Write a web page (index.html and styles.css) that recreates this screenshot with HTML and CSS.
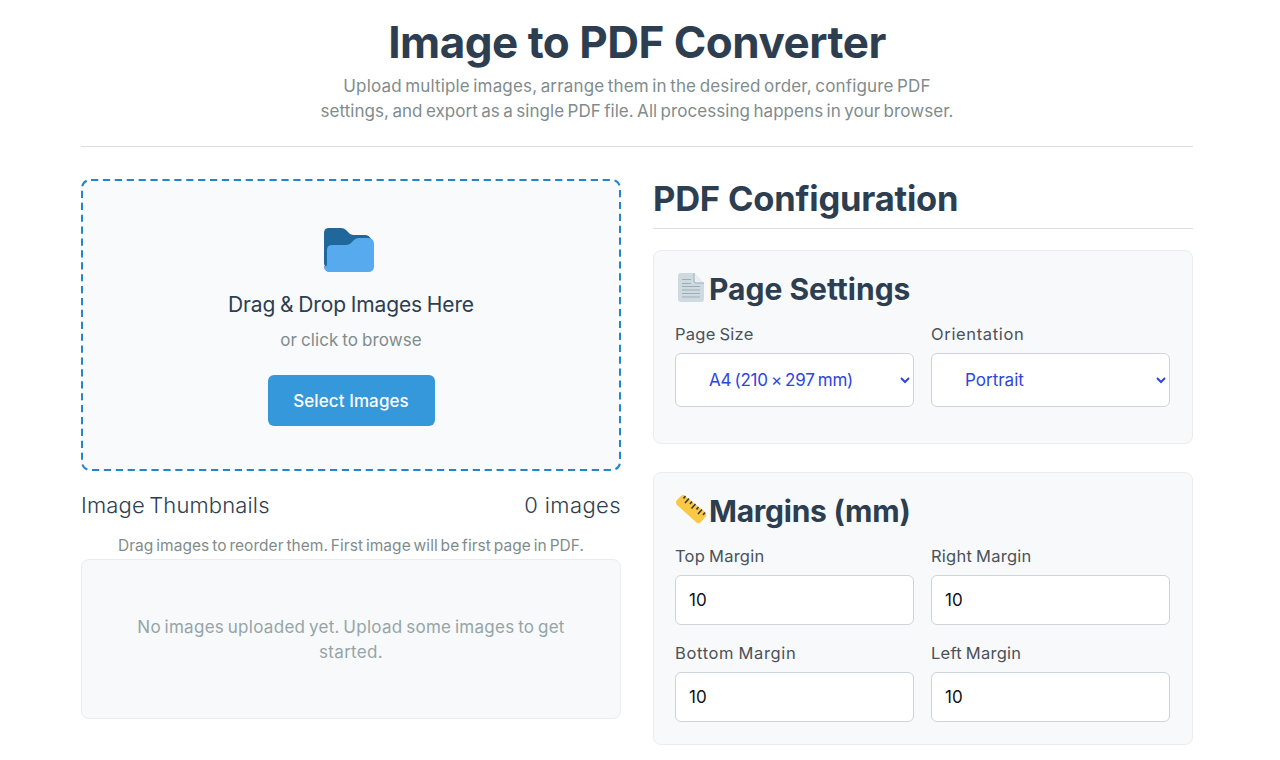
FILE: index.html
```html
<!DOCTYPE html>
<html lang="en">
	<head>
		<meta charset="utf-8">
		<title>Image to PDF Converter</title>
		<link rel="stylesheet" href="styles.css">
	</head>
	<body>
		<div class="container">
			<header>
				<h1>Image to PDF Converter</h1>
				<p class="subtitle"><span class="sub-first">Upload multiple images, arrange them in the desired order, configure PDF</span><br><span class="sub-second">settings, and export as a single PDF file. All processing happens in your browser.</span></p>
			</header>
			<main>
				<section class="upload">
					<div class="drop-area">
						<svg class="dashes" viewBox="0 0 540 292">
							<rect x="1" y="1" width="538" height="290" rx="8"/>
						</svg>
						<svg class="folder" viewBox="0 0 51 44">
							<path fill="#20679b" d="M0 5q0-5 5-5h12q3 0 5 2l4 4q2 1 4 1h11q4 0 6 4v28H4q-4 0-4-4z"/>
							<path fill="#57aaee" d="M3 22q0-5 5-5h14q3 0 5-2l3-3q2-2 5-2h9q6 0 6 6v22q0 6-6 6H6q-5 0-6-5 3 0 3-3z"/>
							<path fill="#57aaee" d="M0 38h6v6q-5 0-6-5z"/>
						</svg>
						<div class="drop-text">Drag &amp; Drop Images Here</div>
						<div class="drop-sub">or click to browse</div>
						<button class="btn" type="button">Select Images</button>
					</div>
					<div class="thumb-header">
						<span class="thumb-title">Image Thumbnails</span>
						<span class="thumb-count">0 images</span>
					</div>
					<p class="hint">Drag images to reorder them. First image will be first page in PDF.</p>
					<div class="thumbs">
						<p>No images uploaded yet. Upload some images to get<br>started.</p>
					</div>
				</section>
				<section class="config">
					<h2>PDF Configuration</h2>
					<div class="card page-card">
						<h3>
							<svg class="icon" viewBox="0 0 34 34">
								<path fill="#cfd9e0" d="M6 2h13l10 10v16q0 3-3 3H6q-3 0-3-3V5q0-3 3-3z"/>
								<path fill="#e8eef3" d="M19 2l10 10h-8q-2 0-2-2z"/>
								<path fill="none" stroke="#9dadb8" stroke-width="1" d="M19 2v8q0 2 2 2h8M7 8.500h9M7 12.500h9M7 15.500h18M7 19h18M7 22.500h18M7 26h18"/>
							</svg>
							<span>Page Settings</span>
						</h3>
						<div class="grid">
							<div class="field">
								<label for="size">Page Size</label>
								<select id="size" class="size"><option>A4 (210 × 297 mm)</option><option>Letter</option></select>
							</div>
							<div class="field">
								<label for="orient" class="wide">Orientation</label>
								<select id="orient"><option>Portrait</option><option>Landscape</option></select>
							</div>
						</div>
					</div>
					<div class="card margin-card">
						<h3>
							<svg class="icon" viewBox="0 0 34 34">
								<path fill="#fbc843" d="M2 7l4-4q2-2 4 0l20 16q2 2 1 4l-5 6q-2 2-4 1L2 12q-2-3 0-5z"/>
								<path fill="none" stroke="#3b3a3c" stroke-width="1.600" d="M10.500 3L8.500 5.500M14 5.500l-4 4.500M17 8.500L15 11M20.500 11l-4 4.500M23.500 14l-2 2.500M27 16.500L23 21M30 19.500L28 22"/>
							</svg>
							<span class="tight">Margins (mm)</span>
						</h3>
						<div class="grid">
							<div class="field">
								<label for="top">Top Margin</label>
								<input type="text" id="top" value="10">
							</div>
							<div class="field">
								<label for="right">Right Margin</label>
								<input type="text" id="right" value="10">
							</div>
							<div class="field">
								<label for="bottom" class="wide">Bottom Margin</label>
								<input type="text" id="bottom" value="10">
							</div>
							<div class="field">
								<label for="left">Left Margin</label>
								<input type="text" id="left" value="10">
							</div>
						</div>
					</div>
				</section>
			</main>
		</div>
	</body>
</html>
```

FILE: styles.css
```css
* {
	box-sizing: border-box;
	margin: 0;
	padding: 0;
}

body {
	background: #fff;
	color: #2c3e50;
	font-family: Inter, "Liberation Sans", sans-serif;
	font-size: 17px;
	overflow: hidden;
}

.container {
	width: 1112px;
	margin-left: 81px;
}

header {
	padding: 16px 0 22px;
	border-bottom: 1px solid #dcdfe1;
	text-align: center;
	white-space: nowrap;
}

h1 {
	font-size: 44px;
	line-height: 52px;
	margin-bottom: 6px;
	letter-spacing: -0.500px;
}

.subtitle {
	color: #7f8c8d;
	line-height: 25px;
	word-spacing: -1.500px;
}

.sub-first {
	letter-spacing: 0.160px;
}

.sub-second {
	letter-spacing: 0.060px;
}

main {
	display: grid;
	grid-template-columns: 1fr 1fr;
	gap: 32px;
	padding-top: 32px;
}

.drop-area {
	position: relative;
	display: flex;
	flex-direction: column;
	align-items: center;
	height: 292px;
	padding-top: 49px;
	border-radius: 9px;
	background: #f8fafc;
}

.dashes {
	position: absolute;
	left: 0;
	top: 0;
	width: 100%;
	height: 100%;
	fill: none;
	stroke: #2685c7;
	stroke-width: 2;
	stroke-dasharray: 7.200 4.700;
	stroke-dashoffset: -1;
}

.folder {
	width: 51px;
	height: 44px;
	margin-right: 3px;
}

.drop-text {
	margin-top: 18px;
	font-size: 21px;
	line-height: 30px;
	letter-spacing: -0.120px;
	word-spacing: -1px;
}

.drop-sub {
	margin-top: 8px;
	line-height: 24px;
	color: #7f8c8d;
	letter-spacing: 0.100px;
	word-spacing: -1px;
}

.btn {
	width: 167px;
	height: 51px;
	margin-top: 23px;
	border: none;
	border-radius: 6px;
	background: #3498db;
	color: #fff;
	font: 500 17px Inter, "Liberation Sans", sans-serif;
	letter-spacing: 0.100px;
}

.thumb-header {
	display: flex;
	justify-content: space-between;
	margin-top: 19px;
	font-size: 22px;
	line-height: 30px;
	font-weight: 300;
}

.thumb-title {
	letter-spacing: 0.150px;
	word-spacing: -2px;
}

.thumb-count {
	letter-spacing: 0.400px;
}

.hint {
	margin-top: 13px;
	font-size: 15.500px;
	line-height: 26px;
	color: #7f8c8d;
	text-align: center;
	white-space: nowrap;
	letter-spacing: 0.040px;
	word-spacing: -1.500px;
}

.thumbs {
	height: 160px;
	padding-top: 55px;
	border: 1px solid #eaecef;
	border-radius: 8px;
	background: #f8f9fb;
	color: #95a5a6;
	line-height: 25px;
	text-align: center;
	white-space: nowrap;
	letter-spacing: 0.300px;
	word-spacing: -1.500px;
}

h2 {
	height: 50px;
	border-bottom: 1px solid #dcdfe1;
	font-size: 34.500px;
	line-height: 39px;
	letter-spacing: -0.200px;
}

.card {
	padding: 20px 22px 0 21px;
	border: 1px solid #eaecef;
	border-radius: 8px;
	background: #f8f9fb;
}

.page-card {
	height: 194px;
	margin-top: 21px;
}

.margin-card {
	height: 273px;
	margin-top: 28px;
}

h3 {
	display: flex;
	height: 36px;
	font-size: 30px;
	line-height: 36px;
}

.tight {
	letter-spacing: -0.250px;
}

.icon {
	width: 34px;
	height: 34px;
}

.grid {
	display: grid;
	grid-template-columns: 1fr 1fr;
	column-gap: 17px;
}

.field {
	height: 97px;
	padding-top: 15px;
}

label {
	display: block;
	margin-bottom: 6px;
	color: #4a5258;
	font-size: 16.500px;
	line-height: 25px;
	letter-spacing: 0.250px;
	word-spacing: -1px;
}

.wide {
	letter-spacing: 0.650px;
}

select,
input {
	display: block;
	width: 100%;
	height: 50px;
	padding: 0 13px;
	border: 1px solid #ced4da;
	border-radius: 6px;
	background: #fff;
	color: #111;
	font: 17px Inter, "Liberation Sans", sans-serif;
}

select {
	height: 54px;
	padding: 0 0 0 29px;
	color: #2d46dc;
}

.size {
	letter-spacing: -0.200px;
	word-spacing: -1.500px;
}
```
